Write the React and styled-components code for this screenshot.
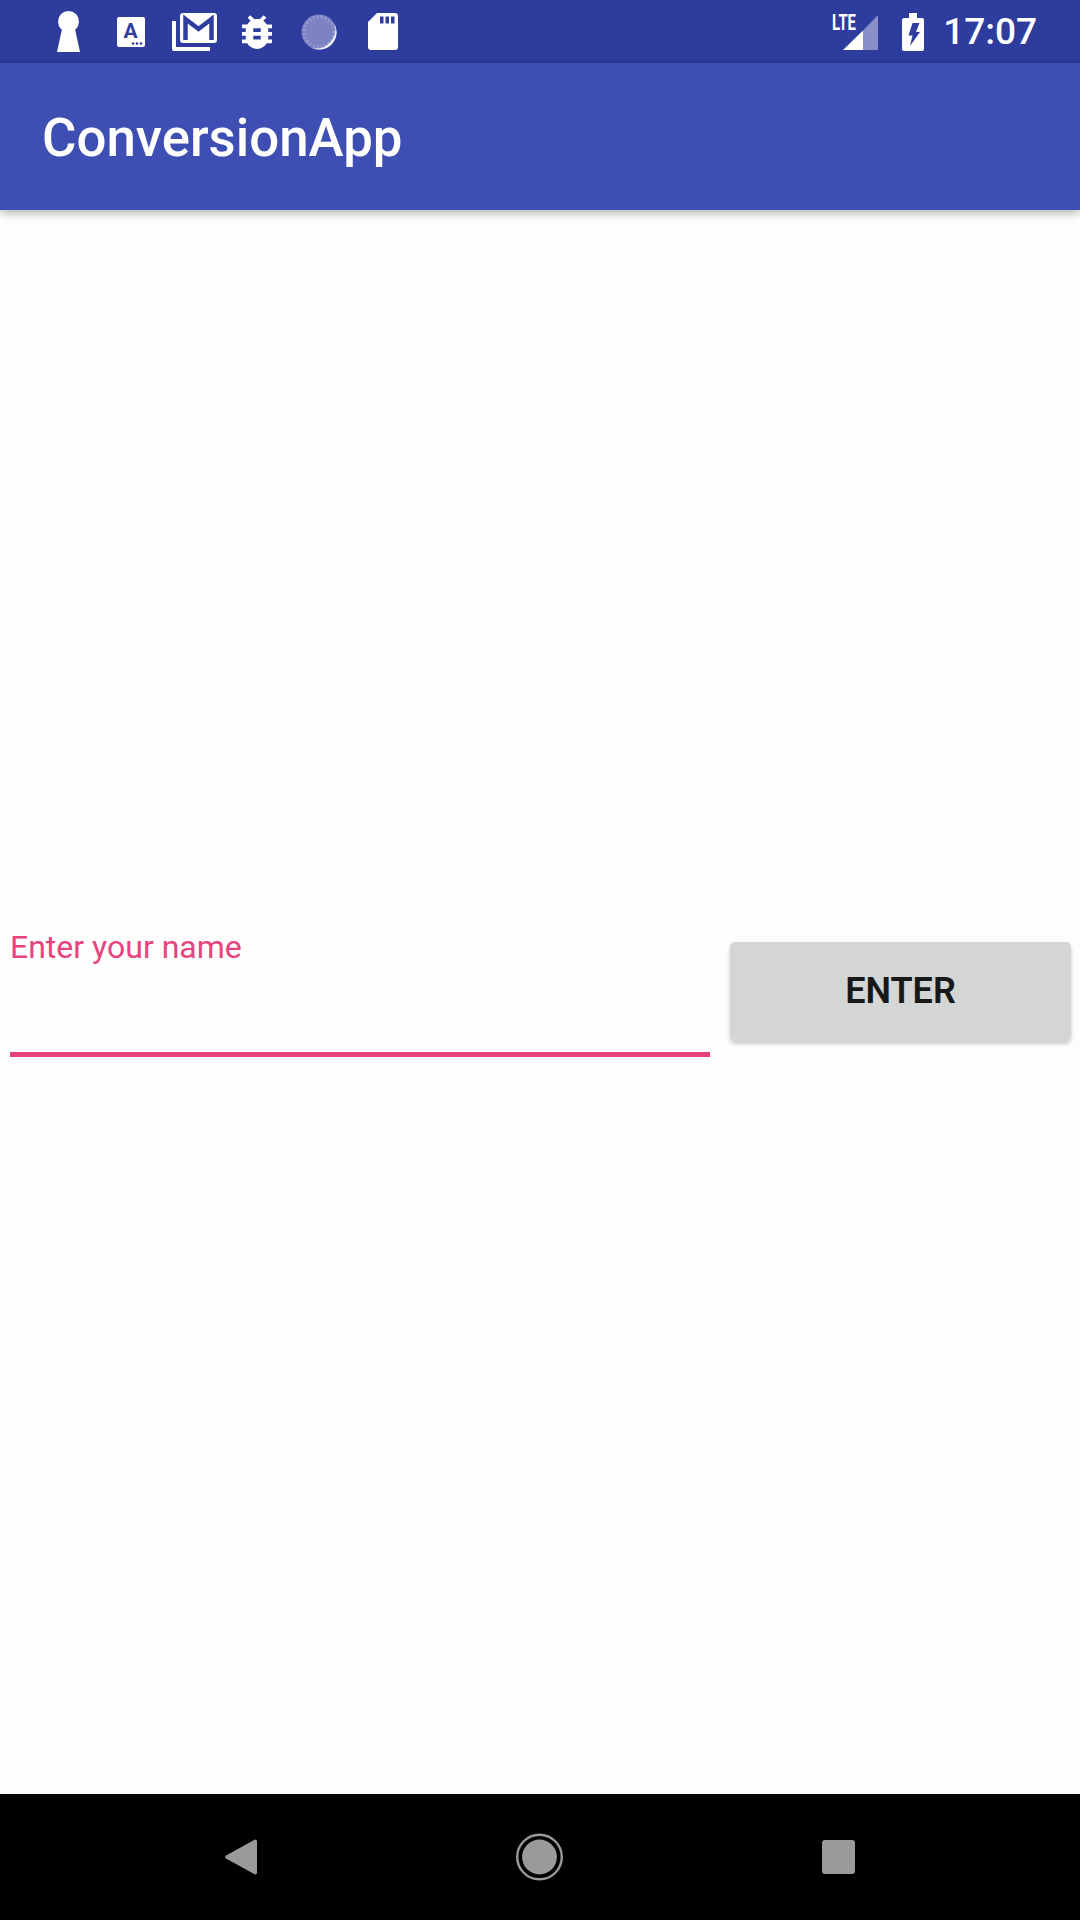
import styled, { createGlobalStyle, css } from 'styled-components';

const GlobalStyle = createGlobalStyle`
  html, body {
    margin: 0;
    padding: 0;
    background: #fff;
  }
  * {
    box-sizing: border-box;
  }
`;

// the capture is a dithered gif, so flat surfaces get a fine 2px checker
const dither = (a, b) => css`
  background: repeating-conic-gradient(${a} 0 25%, ${b} 0 50%) 0 0 / 2px 2px;
`;

const Screen = styled.div`
  width: 1080px;
  height: 1920px;
  display: flex;
  flex-direction: column;
  font-family: Roboto, "Liberation Sans", sans-serif;
  overflow: hidden;
`;

const StatusBar = styled.div`
  height: 63px;
  flex: none;
  display: flex;
  align-items: center;
  justify-content: space-between;
  padding: 0 43px 0 57px;
  ${dither('#29379a', '#3341a0')}
`;

const IconRow = styled.div`
  display: flex;
  align-items: center;
`;

const StatusIcon = styled.svg`
  display: block;
  flex: none;
  margin-left: ${(p) => p.$gap || 0}px;
`;

const Clock = styled.span`
  color: #fff;
  font-size: 37px;
  font-weight: 500;
  line-height: 63px;
  margin-left: 19px;
`;

const AppBar = styled.header`
  height: 147px;
  flex: none;
  display: flex;
  align-items: center;
  padding: 3px 0 0 42px;
  position: relative;
  z-index: 2;
  box-shadow: 0 3px 9px rgba(0, 0, 0, 0.3);
  ${dither('#384ab0', '#4354b6')}
`;

const Title = styled.h1`
  margin: 0;
  color: #fff;
  font-size: 52.8px;
  font-weight: 500;
  line-height: 62px;
`;

const Content = styled.main`
  flex: 1;
  padding-top: 715px;
  ${dither('#ffffff', '#fbfbfa')}
`;

const FormRow = styled.div`
  display: flex;
  align-items: center;
  gap: 20px;
  padding: 0 9px 0 10px;
`;

const Field = styled.div`
  width: 700px;
  flex: none;
  display: flex;
  flex-direction: column;
`;

const FieldLabel = styled.label`
  color: #e8437f;
  font-size: 32px;
  line-height: 44px;
`;

const NameInput = styled.input`
  display: block;
  width: 100%;
  height: 88px;
  border: 0;
  border-bottom: 5px solid #e6417d;
  background: transparent;
  outline: none;
  padding: 0;
`;

const EnterButton = styled.button`
  width: 341px;
  height: 99px;
  flex: none;
  border: 0;
  border-radius: 5px;
  padding: 0;
  color: #171818;
  font-family: inherit;
  font-size: 36px;
  font-weight: 600;
  box-shadow: 0 3px 4px rgba(0, 0, 0, 0.2);
  ${dither('#d0d2d0', '#d8d9d8')}
`;

const NavBar = styled.nav`
  height: 126px;
  flex: none;
  background: #000;
  display: flex;
  align-items: center;
  gap: 259px;
  padding-left: 225px;
`;

const KeyholeIcon = () => (
  <StatusIcon width="23" height="41" viewBox="0 0 23 41">
    <circle cx="11.5" cy="10.5" r="10.5" fill="#fff" />
    <path d="M5 18 L0 41 H23 L18 18Z" fill="#fff" />
  </StatusIcon>
);

const KeyboardIcon = () => (
  <StatusIcon $gap={37} width="28" height="30" viewBox="0 0 28 30">
    <rect width="28" height="30" rx="2" fill="#fff" />
    <text x="13.5" y="21" textAnchor="middle" fontFamily="Roboto, sans-serif" fontSize="21" fontWeight="700" fill="#2f3e9e">A</text>
    <circle cx="16" cy="26.5" r="1.3" fill="#2f3e9e" />
    <circle cx="20" cy="26.5" r="1.3" fill="#2f3e9e" />
    <circle cx="24" cy="26.5" r="1.3" fill="#2f3e9e" />
  </StatusIcon>
);

const MailIcon = () => (
  <StatusIcon $gap={27} width="45" height="38" viewBox="0 0 45 38">
    <path d="M0 8 H4 V34 H38 V38 H2 a2 2 0 0 1 -2 -2Z" fill="#fff" />
    <rect x="8" y="0" width="37" height="30" rx="3" fill="#fff" />
    <path d="M13.5 27 V6 L26.5 16 L39.5 6 V27" fill="none" stroke="#2f3e9e" strokeWidth="4.5" />
  </StatusIcon>
);

const BugIcon = () => (
  <StatusIcon $gap={25} width="30" height="34" viewBox="4 3 16 18">
    <path
      fill="#fff"
      d="M20 8h-2.81c-.45-.78-1.07-1.45-1.82-1.96L17 4.41 15.59 3l-2.17 2.17C12.96 5.06 12.49 5 12 5c-.49 0-.96.06-1.41.17L8.41 3 7 4.41l1.62 1.63C7.88 6.55 7.26 7.22 6.81 8H4v2h2.09c-.05.33-.09.66-.09 1v1H4v2h2v1c0 .34.04.67.09 1H4v2h2.81c1.04 1.79 2.97 3 5.19 3s4.15-1.21 5.19-3H20v-2h-2.09c.05-.33.09-.66.09-1v-1h2v-2h-2v-1c0-.34-.04-.67-.09-1H20V8zm-6 8h-4v-2h4v2zm0-4h-4v-2h4v2z"
    />
  </StatusIcon>
);

const SyncDiscIcon = () => (
  <StatusIcon $gap={29} width="37" height="36" viewBox="0 0 37 36">
    <circle cx="18" cy="18" r="17.5" fill="#7d82c2" />
    <circle cx="18" cy="18" r="15" fill="none" stroke="#9a9ed4" strokeWidth="3" strokeDasharray="1.6 2.4" />
    <path d="M33.2 9.25 A17.5 17.5 0 0 1 10.6 33.9 A19 19 0 0 0 33.2 9.25Z" fill="#f2f3fb" />
  </StatusIcon>
);

const SdCardIcon = () => (
  <StatusIcon $gap={30} width="30" height="37" viewBox="0 0 30 37">
    <path d="M9 0 H27 a3 3 0 0 1 3 3 V34 a3 3 0 0 1 -3 3 H3 a3 3 0 0 1 -3 -3 V9Z" fill="#fff" />
    <rect x="12" y="3.5" width="3.5" height="7" fill="#2f3e9e" />
    <rect x="17.5" y="3.5" width="3.5" height="7" fill="#2f3e9e" />
    <rect x="23" y="3.5" width="3.5" height="7" fill="#2f3e9e" />
  </StatusIcon>
);

const SignalIcon = () => (
  <StatusIcon width="46" height="47" viewBox="0 -5 46 47">
    <text x="0" y="17" fontFamily="Roboto, sans-serif" fontSize="22" fontWeight="700" fill="#fff" textLength="24" lengthAdjust="spacingAndGlyphs">LTE</text>
    <path d="M31 17.5 L11 37 H31Z" fill="#fff" />
    <path d="M31 17.5 L46 2 V35.5 a1.5 1.5 0 0 1 -1.5 1.5 H31Z" fill="#8a8fca" />
  </StatusIcon>
);

const BatteryIcon = () => (
  <StatusIcon $gap={24} width="22" height="38" viewBox="0 0 22 38">
    <path d="M7 0 H15 V5 H20 a2 2 0 0 1 2 2 V36 a2 2 0 0 1 -2 2 H2 a2 2 0 0 1 -2 -2 V7 a2 2 0 0 1 2 -2 H7Z" fill="#fff" />
    <path d="M10.5 10 H17.5 L14 19 H18 L8 33 L10.5 22.5 H6.5Z" fill="#2f3e9e" />
  </StatusIcon>
);

const BackIcon = () => (
  <svg width="32" height="36" viewBox="0 0 32 36">
    <path d="M30 0.5 a2 2 0 0 1 2 1.5 V34 a2 2 0 0 1 -2 1.5 L1 19.5 a2 2 0 0 1 0 -3Z" fill="#9a9a9a" />
  </svg>
);

const HomeIcon = () => (
  <svg width="47" height="48" viewBox="0 0 47 48">
    <circle cx="23.5" cy="24" r="22.3" fill="none" stroke="#9a9a9a" strokeWidth="2.4" />
    <circle cx="23.5" cy="24" r="17.4" fill="#9a9a9a" />
  </svg>
);

const RecentsIcon = () => (
  <svg width="33" height="34" viewBox="0 0 33 34">
    <rect width="33" height="34" rx="3" fill="#9a9a9a" />
  </svg>
);

export default function App() {
  return (
    <Screen>
      <GlobalStyle />
      <StatusBar>
        <IconRow>
          <KeyholeIcon />
          <KeyboardIcon />
          <MailIcon />
          <BugIcon />
          <SyncDiscIcon />
          <SdCardIcon />
        </IconRow>
        <IconRow>
          <SignalIcon />
          <BatteryIcon />
          <Clock>17:07</Clock>
        </IconRow>
      </StatusBar>
      <AppBar>
        <Title>ConversionApp</Title>
      </AppBar>
      <Content>
        <FormRow>
          <Field>
            <FieldLabel htmlFor="name">Enter your name</FieldLabel>
            <NameInput id="name" />
          </Field>
          <EnterButton>ENTER</EnterButton>
        </FormRow>
      </Content>
      <NavBar>
        <BackIcon />
        <HomeIcon />
        <RecentsIcon />
      </NavBar>
    </Screen>
  );
}
